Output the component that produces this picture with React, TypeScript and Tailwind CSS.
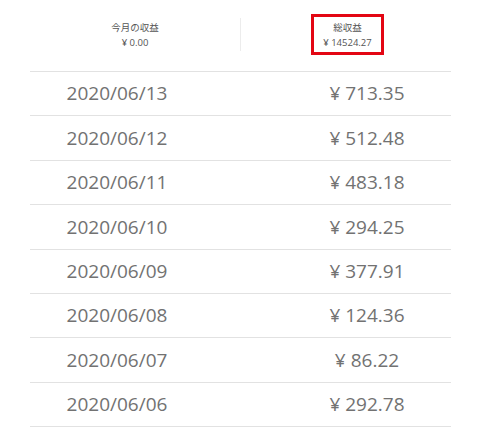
const rows = [
  { date: "2020/06/13", amount: "713.35" },
  { date: "2020/06/12", amount: "512.48" },
  { date: "2020/06/11", amount: "483.18" },
  { date: "2020/06/10", amount: "294.25" },
  { date: "2020/06/09", amount: "377.91" },
  { date: "2020/06/08", amount: "124.36" },
  { date: "2020/06/07", amount: "86.22" },
  { date: "2020/06/06", amount: "292.78" },
];

const font = { fontFamily: '"Open Sans", "Noto Sans CJK JP", sans-serif' };

function SummaryCell({ label, value, marked }: { label: string; value: string; marked?: boolean }) {
  return (
    <div className="flex items-center justify-center">
      <div
        className={
          marked
            ? "ml-[3px] flex h-[41px] w-[73px] flex-col items-center justify-center border-[3px] border-[#e30613]"
            : "flex h-[41px] flex-col items-center justify-center"
        }
      >
        <p className="text-[9.5px] leading-[15px] text-[#555]">{label}</p>
        <p className="text-[9.5px] leading-[15px] text-[#555]">{value}</p>
      </div>
    </div>
  );
}

export default function App() {
  return (
    <div className="h-[430px] w-[480px] bg-white" style={font}>
      <div className="ml-[30px] w-[421px]">
        <div className="grid h-[72px] grid-cols-[1fr_1px_1fr] items-center border-b border-[#e2e2e2] pb-[2px]">
          <SummaryCell label="今月の収益" value="¥ 0.00" />
          <div className="h-[33px] w-px bg-[#ececec]" />
          <SummaryCell label="総収益" value="¥ 14524.27" marked />
        </div>

        {rows.map((row) => (
          <div
            key={row.date}
            className="flex h-[44.4px] items-center border-b border-[#e2e2e2] text-[19px] text-[#727272]"
          >
            <span className="ml-[12px] w-[150px] text-center">{row.date}</span>
            <span className="ml-[100px] w-[150px] text-center">¥ {row.amount}</span>
          </div>
        ))}
      </div>
    </div>
  );
}
